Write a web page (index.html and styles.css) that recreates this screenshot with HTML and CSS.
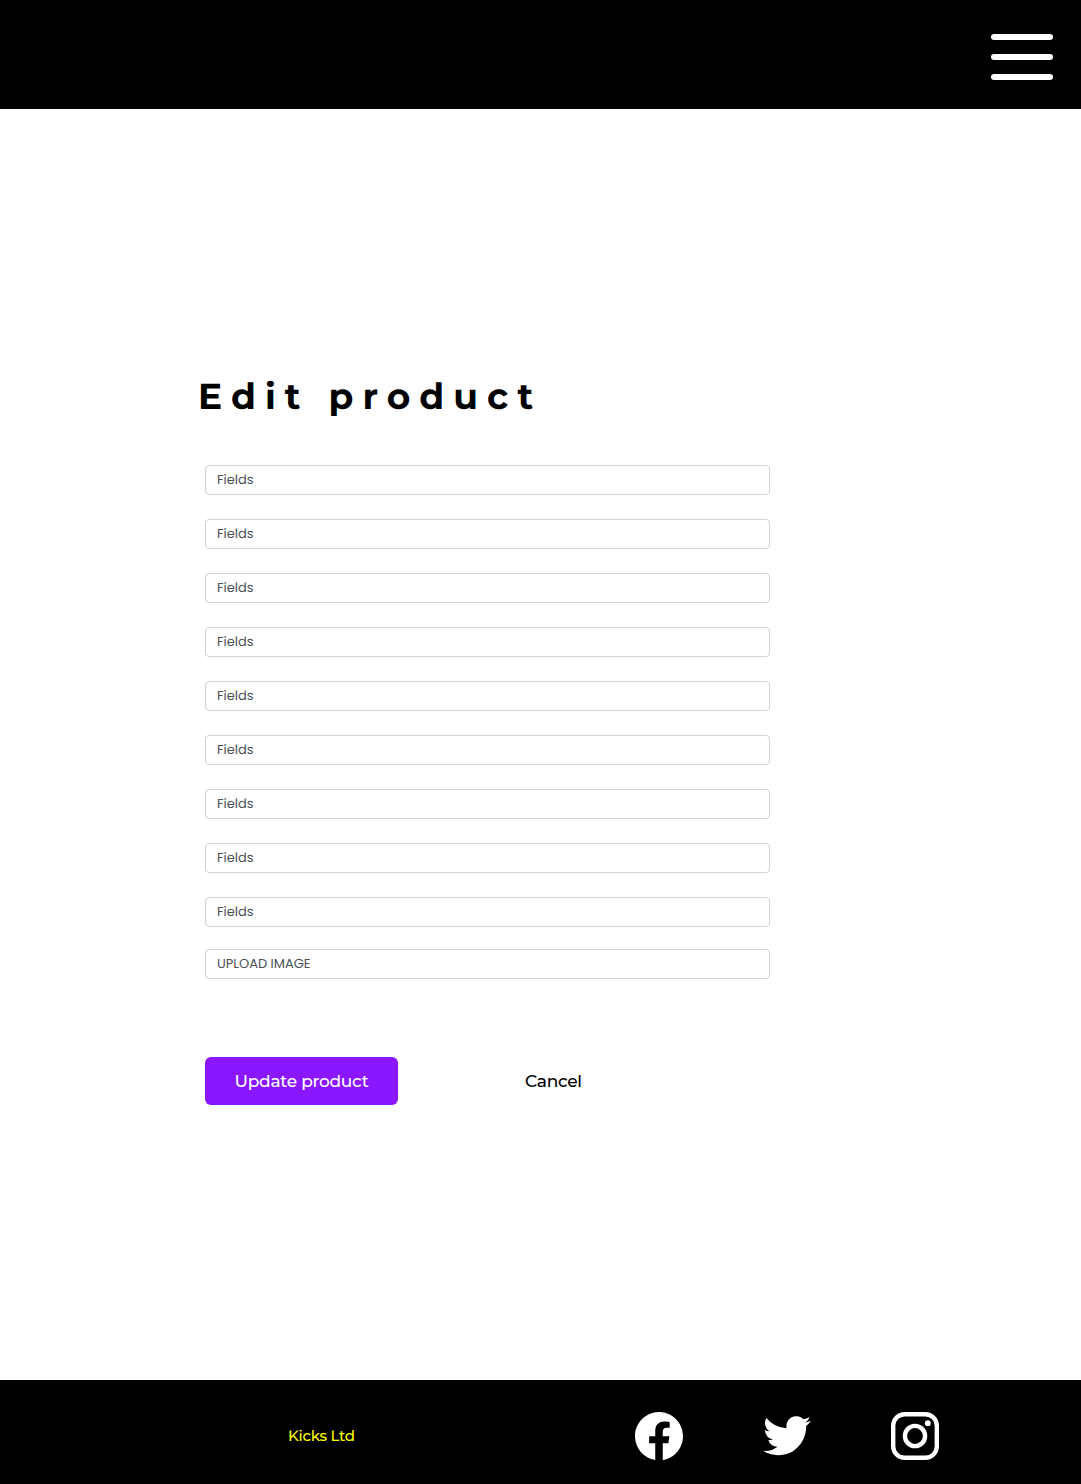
FILE: index.html
```html
<!DOCTYPE html>
<html lang="en">
<head>
<meta charset="utf-8">
<title>Edit product</title>
<link rel="stylesheet" href="styles.css">
</head>
<body>
<header class="topbar">
  <button class="menu" aria-label="Menu"><span class="bar"></span><span class="bar"></span><span class="bar"></span></button>
</header>
<main class="content">
  <h1 class="title">Edit product</h1>
  <form class="form">
    <div class="field"><span>Fields</span></div>
    <div class="field"><span>Fields</span></div>
    <div class="field"><span>Fields</span></div>
    <div class="field"><span>Fields</span></div>
    <div class="field"><span>Fields</span></div>
    <div class="field"><span>Fields</span></div>
    <div class="field"><span>Fields</span></div>
    <div class="field"><span>Fields</span></div>
    <div class="field"><span>Fields</span></div>
    <div class="field upload"><span>UPLOAD IMAGE</span></div>
    <div class="actions">
      <button type="button" class="update"><span>Update product</span></button>
      <button type="button" class="cancel"><span>Cancel</span></button>
    </div>
  </form>
</main>
<footer class="footer">
  <span class="brand">Kicks Ltd</span>
  <nav class="social">
    <a aria-label="Facebook"><svg class="icon" viewBox="0 0 16 16"><path d="M16 8.049c0-4.446-3.582-8.05-8-8.05C3.58 0-.002 3.603-.002 8.05c0 4.017 2.926 7.347 6.75 7.951v-5.625h-2.03V8.05H6.75V6.275c0-2.017 1.195-3.131 3.022-3.131.876 0 1.791.157 1.791.157v1.98h-1.009c-.993 0-1.303.621-1.303 1.258v1.51h2.218l-.354 2.326H9.25V16c3.824-.604 6.75-3.934 6.75-7.951z"/></svg></a>
    <a aria-label="Twitter"><svg class="icon" viewBox="0 .6 16 16"><path d="M5.026 15c6.038 0 9.341-5.003 9.341-9.334 0-.14 0-.282-.006-.422A6.685 6.685 0 0 0 16 3.542a6.658 6.658 0 0 1-1.889.518 3.301 3.301 0 0 0 1.447-1.817 6.533 6.533 0 0 1-2.087.793A3.286 3.286 0 0 0 7.875 6.03a9.325 9.325 0 0 1-6.767-3.429 3.289 3.289 0 0 0 1.018 4.382A3.323 3.323 0 0 1 .64 6.575v.045a3.288 3.288 0 0 0 2.632 3.218 3.203 3.203 0 0 1-.865.115 3.23 3.23 0 0 1-.614-.057 3.283 3.283 0 0 0 3.067 2.277A6.588 6.588 0 0 1 .78 13.58a6.32 6.32 0 0 1-.78-.045A9.344 9.344 0 0 0 5.026 15z"/></svg></a>
    <a aria-label="Instagram"><svg class="icon" viewBox="0 0 48 48"><rect class="line" x="2.2" y="2.2" width="43.6" height="43.6" rx="11.5"/><circle class="line" cx="24" cy="24" r="10.1"/><circle cx="36.8" cy="11.2" r="2.9"/></svg></a>
  </nav>
</footer>
</body>
</html>
```

FILE: styles.css
```css
* { box-sizing: border-box; }
body {
  margin: 0;
  min-height: 1484px;
  display: flex;
  flex-direction: column;
  background: #fff;
  color: #000;
  font-family: Montserrat, Inter, sans-serif;
  font-weight: 500;
  text-rendering: geometricPrecision;
}
button { border: 0; padding: 0; background: none; font: inherit; }
.topbar {
  height: 109px;
  padding: 34px 28px 0;
  display: flex;
  justify-content: flex-end;
  align-items: flex-start;
  background: #000;
}
.menu { width: 62px; display: flex; flex-direction: column; gap: 14px; }
.bar { height: 6px; border-radius: 3px; background: #fff; }
.content { flex: 1; padding: 266px 0 0 205px; }
.title {
  margin: 0 0 46px -7px;
  font-size: 36px;
  line-height: 44px;
  font-weight: 700;
  letter-spacing: 9px;
  white-space: nowrap;
}
.form { width: 565px; display: flex; flex-direction: column; gap: 24px; }
.field {
  height: 30px;
  padding: 0 11px;
  display: flex;
  align-items: center;
  border: 1px solid #ced4da;
  border-radius: 4px;
  color: #495057;
  font-family: Poppins, Inter, sans-serif;
  font-size: 13px;
  font-weight: 400;
  line-height: 18px;
}
.upload { margin-top: -2px; }
.actions { margin-top: 54px; display: flex; gap: 127px; }
.update, .cancel { height: 48px; font-size: 17px; line-height: 24px; letter-spacing: -0.016em; }
.update { width: 193px; border-radius: 6px; background: #8a17ff; color: #fff; }
.cancel { color: #000; }
.footer {
  height: 104px;
  padding: 8px 142px 0 288px;
  display: flex;
  align-items: center;
  justify-content: space-between;
  background: #000;
}
.brand { color: #ff0; font-size: 15px; line-height: 20px; letter-spacing: -0.016em; }
.social { display: flex; gap: 80px; }
.icon { display: block; width: 48px; height: 48px; fill: #fff; }
.line { fill: none; stroke: #fff; stroke-width: 4.4; }
```
